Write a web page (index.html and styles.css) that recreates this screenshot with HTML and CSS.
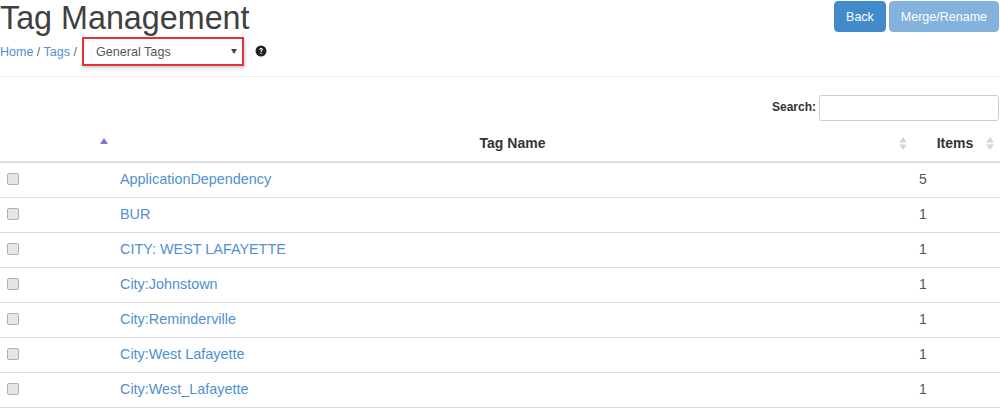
FILE: index.html
```html
<!DOCTYPE html>
<html lang="en">
<head>
    <meta charset="UTF-8">
    <title>Tag Management</title>
    <link rel="stylesheet" href="styles.css">
</head>
<body>

    <div class="page-header">
        <div class="header-left">
            <h1>Tag Management</h1>
            <div class="crumbs">
                <span class="crumb-links"><a href="#">Home</a> / <a href="#">Tags</a> /</span>
                <div class="tag-select">
                    <span>General Tags</span>
                    <i class="caret"></i>
                </div>
                <svg class="help-icon" width="12" height="12" viewBox="0 0 12 12">
                    <circle cx="6" cy="6" r="5.5" fill="#222"/>
                    <path d="M4.2 4.8c0-1.1.8-1.7 1.8-1.7s1.8.6 1.8 1.5c0 1.2-1.4 1.2-1.4 2.3H5.5c0-1.6 1.2-1.5 1.2-2.3 0-.4-.3-.6-.7-.6s-.7.3-.7.8z" fill="#fff"/>
                    <rect x="5.4" y="7.7" width="1.2" height="1.2" fill="#fff"/>
                </svg>
            </div>
        </div>
        <div class="header-buttons">
            <button class="btn">Back</button>
            <button class="btn btn-disabled">Merge/Rename</button>
        </div>
    </div>

    <div class="search-row">
        <label for="search">Search:</label>
        <input type="text" id="search">
    </div>

    <table class="tag-table">
        <thead>
            <tr>
                <th class="col-check">
                    <svg class="sort-asc" width="8" height="6" viewBox="0 0 8 6"><path d="M4 0l4 6H0z" fill="#7a7ad6"/></svg>
                </th>
                <th class="col-name">
                    Tag Name
                    <svg class="sort-both" width="8" height="13" viewBox="0 0 8 13"><path d="M4 0l4 5.5H0zM4 13L0 7.5h8z" fill="#d5d5d5"/></svg>
                </th>
                <th class="col-items">
                    Items
                    <svg class="sort-both" width="8" height="13" viewBox="0 0 8 13"><path d="M4 0l4 5.5H0zM4 13L0 7.5h8z" fill="#d5d5d5"/></svg>
                </th>
            </tr>
        </thead>
        <tbody>
            <tr><td><input type="checkbox"></td><td><a href="#">ApplicationDependency</a></td><td>5</td></tr>
            <tr><td><input type="checkbox"></td><td><a href="#">BUR</a></td><td>1</td></tr>
            <tr><td><input type="checkbox"></td><td><a href="#">CITY: WEST LAFAYETTE</a></td><td>1</td></tr>
            <tr><td><input type="checkbox"></td><td><a href="#">City:Johnstown</a></td><td>1</td></tr>
            <tr><td><input type="checkbox"></td><td><a href="#">City:Reminderville</a></td><td>1</td></tr>
            <tr><td><input type="checkbox"></td><td><a href="#">City:West Lafayette</a></td><td>1</td></tr>
            <tr><td><input type="checkbox"></td><td><a href="#">City:West_Lafayette</a></td><td>1</td></tr>
        </tbody>
    </table>

</body>
</html>
```

FILE: styles.css
```css
body {
    font-family: "Liberation Sans", Arial, sans-serif;
    font-size: 14px;
    color: #333333;
    background-color: #ffffff;
    margin: 0;
    overflow: hidden;
}

a {
    color: #4f90d2;
    text-decoration: none;
}

.page-header {
    display: flex;
    justify-content: space-between;
    height: 76px;
    border-bottom: 1px solid #eeeeee;
}

h1 {
    font-size: 32.3px;
    font-weight: normal;
    line-height: 37px;
    margin: 0;
    color: #404040;
}

.crumbs {
    display: flex;
    align-items: center;
}

.crumb-links {
    width: 82px;
    font-size: 12.5px;
    color: #666666;
}

.tag-select {
    display: flex;
    align-items: center;
    justify-content: space-between;
    box-sizing: border-box;
    width: 162px;
    height: 29px;
    padding: 0 5px 0 12px;
    border: 2px solid #e2333a;
    box-shadow: 1px 2px 3px rgba(0, 0, 0, 0.2);
    font-size: 12.6px;
    color: #555555;
}

.caret {
    width: 0;
    height: 0;
    border-left: 3px solid transparent;
    border-right: 3px solid transparent;
    border-top: 5px solid #444444;
}

.help-icon {
    margin: 0 0 2px 11px;
}

.header-buttons {
    display: flex;
    gap: 3px;
    padding-top: 1px;
    padding-right: 1px;
}

.btn {
    height: 31px;
    padding: 0 11px;
    background-color: #428bca;
    border: 1px solid #428bca;
    border-radius: 4px;
    color: #ffffff;
    font-family: inherit;
    font-size: 12.5px;
}

.btn-disabled {
    opacity: 0.65;
}

/* Search box above the table */
.search-row {
    display: flex;
    justify-content: flex-end;
    align-items: center;
    gap: 3px;
    margin-top: 18px;
}

.search-row label {
    padding-bottom: 2px;
    font-size: 12px;
    font-weight: bold;
}

.search-row input {
    box-sizing: border-box;
    width: 180px;
    height: 26px;
    margin-right: 1px;
    border: 1px solid #cccccc;
    border-radius: 3px;
}

.tag-table {
    width: 100%;
    border-collapse: collapse;
    table-layout: fixed;
}

.tag-table th {
    position: relative;
    height: 36px;
    padding: 4px 0 0;
    border-bottom: 2px solid #dddddd;
    font-size: 14px;
    text-align: center;
}

.col-check {
    width: 120px;
}

.col-items {
    width: 88px;
}

.tag-table th.col-name {
    padding-right: 6px;
}

.tag-table th.col-items {
    padding-right: 1px;
}

.sort-asc {
    position: absolute;
    left: 100px;
    top: 17px;
}

.sort-both {
    position: absolute;
    right: 4px;
    top: 16px;
}

.col-items .sort-both {
    right: 6px;
}

.tag-table td {
    height: 32px;
    padding: 0 0 2px;
    border-bottom: 1px solid #dddddd;
    font-size: 14.4px;
}

.tag-table td:last-child {
    padding-left: 8px;
    color: #555555;
    font-size: 14px;
}

.tag-table input[type="checkbox"] {
    appearance: none;
    display: block;
    box-sizing: border-box;
    width: 12px;
    height: 12px;
    margin: 0 0 0 7px;
    background-color: #e6e6e6;
    border: 1px solid #b0b0b0;
    border-radius: 2px;
}
```
